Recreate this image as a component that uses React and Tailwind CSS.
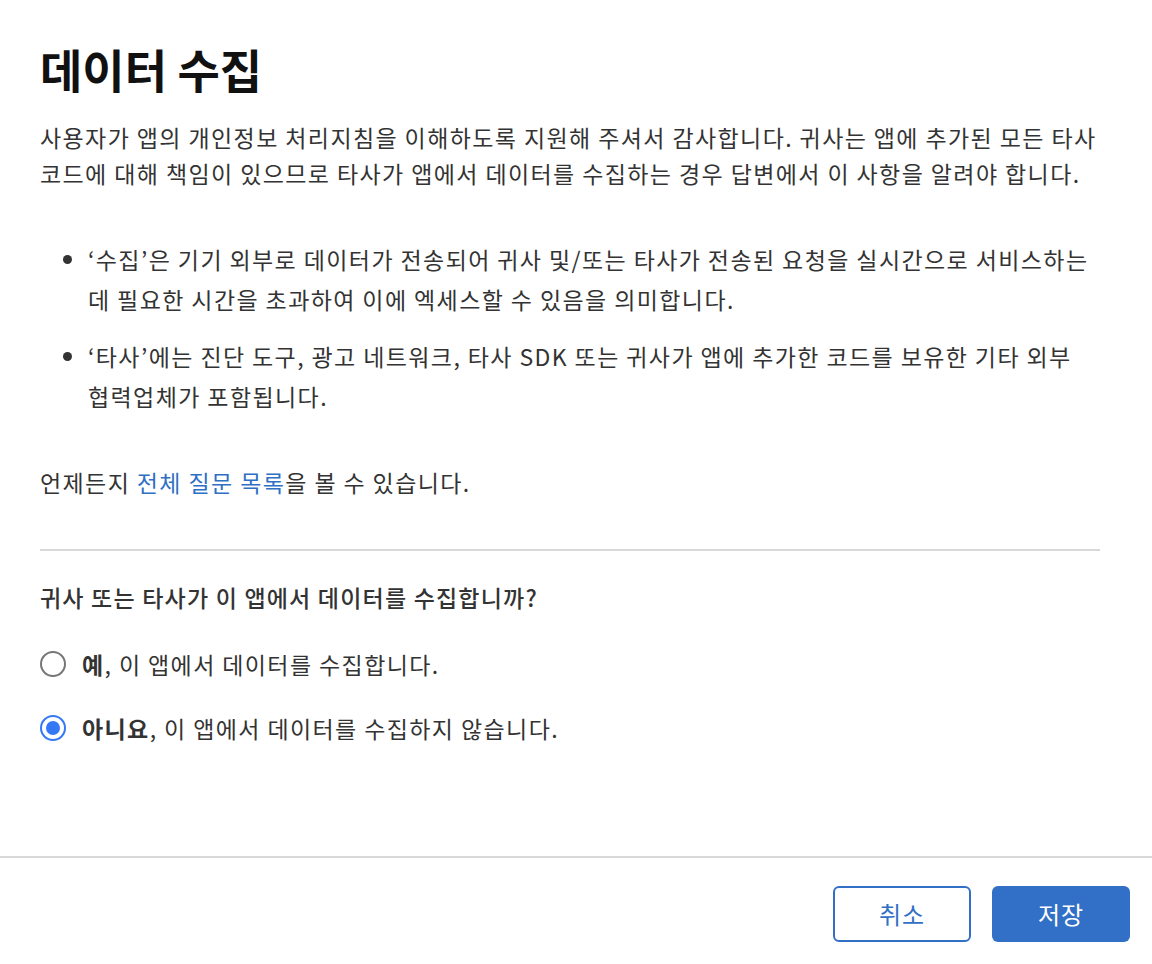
import React from "react";

const font = { fontFamily: '"Noto Sans CJK KR", "Noto Sans", sans-serif' };

function Radio({ checked }) {
  return checked ? (
    <span className="flex h-[26px] w-[26px] shrink-0 items-center justify-center rounded-full border-2 border-[#3478f6] bg-white">
      <span className="h-[14px] w-[14px] rounded-full bg-[#3478f6]" />
    </span>
  ) : (
    <span className="h-[26px] w-[26px] shrink-0 rounded-full border-2 border-[#767676] bg-white" />
  );
}

export default function App() {
  return (
    <div className="flex h-[964px] w-[1152px] flex-col bg-white text-[#333]" style={font}>
      <div className="flex-1 pl-[40px] pr-[52px] pt-[36px]">
        <h1 className="text-[46px] font-bold leading-[64px] text-[#111]">데이터 수집</h1>
        <p className="mt-[19px] text-[23px] leading-[36px] tracking-[1.4px]">
          사용자가 앱의 개인정보 처리지침을 이해하도록 지원해 주셔서 감사합니다. 귀사는 앱에 추가된 모든 타사 코드에 대해 책임이 있으므로 타사가 앱에서 데이터를 수집하는 경우 답변에서 이 사항을 알려야 합니다.
        </p>
        <ul className="mt-[48px] list-disc pl-[48px] text-[23px] leading-[40px] tracking-[1.4px]">
          <li>‘수집’은 기기 외부로 데이터가 전송되어 귀사 및/또는 타사가 전송된 요청을 실시간으로 서비스하는 데 필요한 시간을 초과하여 이에 엑세스할 수 있음을 의미합니다.</li>
          <li className="mt-[17px]">‘타사’에는 진단 도구, 광고 네트워크, 타사 SDK 또는 귀사가 앱에 추가한 코드를 보유한 기타 외부 협력업체가 포함됩니다.</li>
        </ul>
        <p className="mt-[48px] text-[23px] leading-[36px] tracking-[1.4px]">
          언제든지 <span className="text-[#2f6fc4]">전체 질문 목록</span>을 볼 수 있습니다.
        </p>
        <div className="mt-[49px] h-[2px] bg-[#d8d8d8]" />
        <p className="mt-[28px] text-[23px] font-medium leading-[36px] tracking-[1.2px]">
          귀사 또는 타사가 이 앱에서 데이터를 수집합니까?
        </p>
        <div className="mt-[31px] flex items-center gap-[16px] text-[23px] leading-[36px] tracking-[1.4px]">
          <Radio checked={false} />
          <span><b className="font-bold">예</b>, 이 앱에서 데이터를 수집합니다.</span>
        </div>
        <div className="mt-[28px] flex items-center gap-[16px] text-[23px] leading-[36px] tracking-[1.4px]">
          <Radio checked={true} />
          <span><b className="font-bold">아니요</b>, 이 앱에서 데이터를 수집하지 않습니다.</span>
        </div>
      </div>
      <div className="h-[2px] bg-[#d8d8d8]" />
      <div className="flex h-[106px] items-start justify-end gap-[21px] pr-[22px] pt-[28px]">
        <button className="h-[56px] w-[138px] rounded-[6px] border-2 border-[#3170c6] bg-white text-[24px] tracking-[1px] text-[#3170c6]">취소</button>
        <button className="h-[56px] w-[138px] rounded-[6px] bg-[#3170c6] text-[24px] tracking-[1px] text-white">저장</button>
      </div>
    </div>
  );
}
